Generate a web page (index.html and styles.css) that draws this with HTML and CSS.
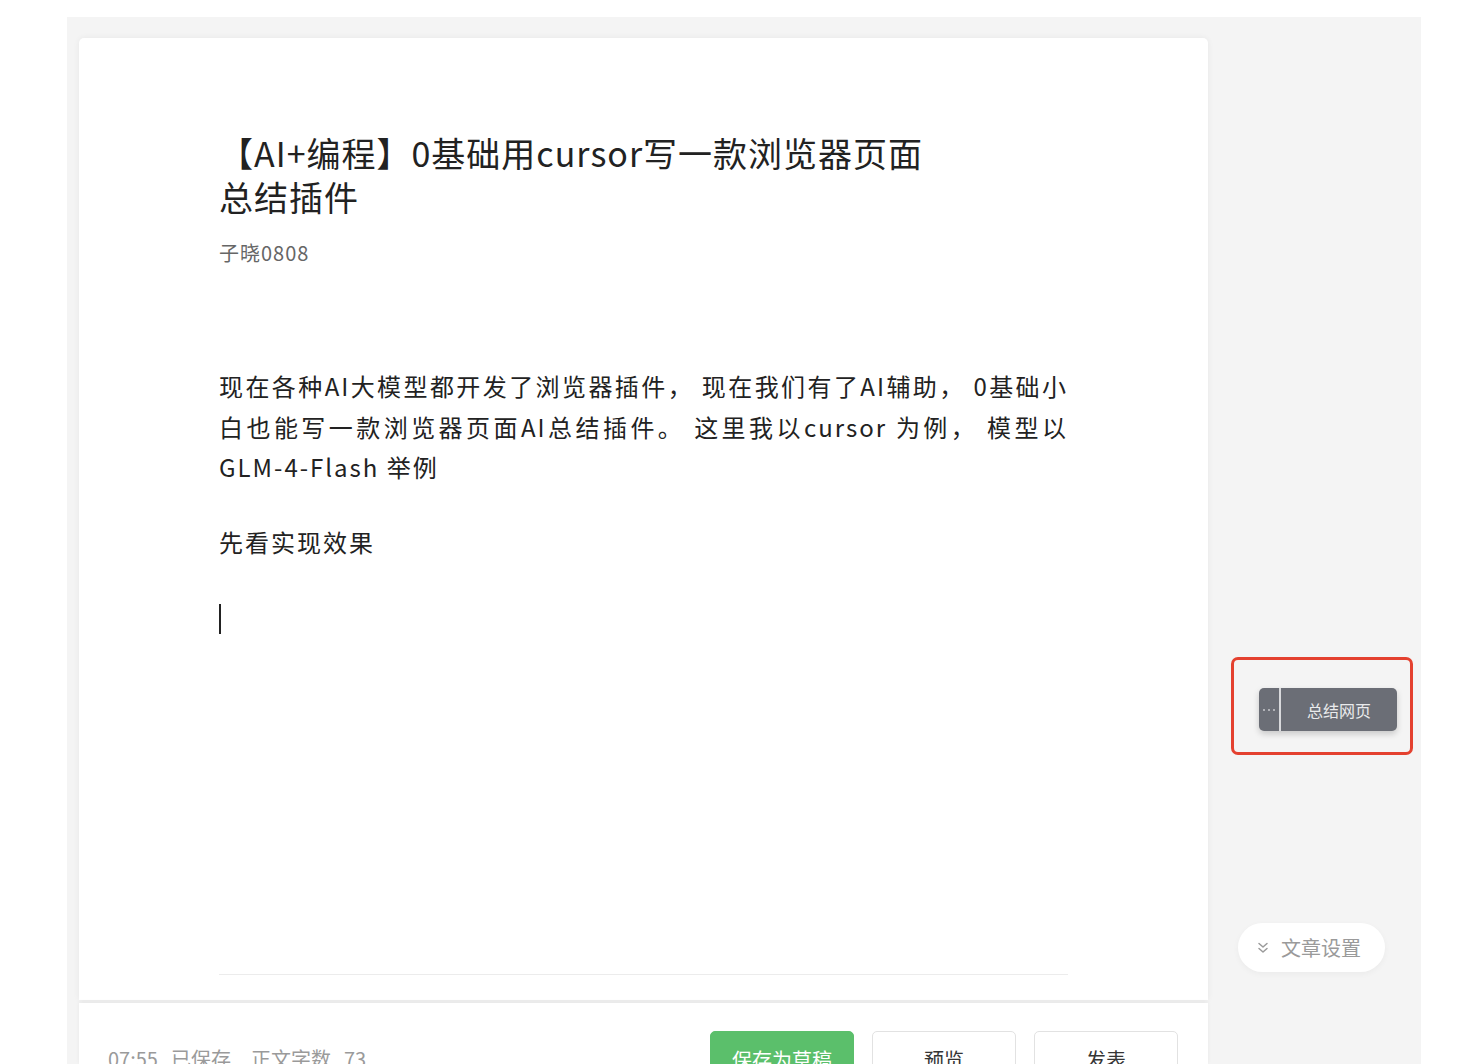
FILE: index.html
```html
<!DOCTYPE html>
<html lang="zh-CN">
<head>
<meta charset="utf-8">
<title>编辑器</title>
<link rel="stylesheet" href="styles.css">
</head>
<body>
<div class="shell">
  <div class="main">
    <div class="editor">
      <h1 class="title"><span class="title-line">【AI+编程】0基础用cursor写一款浏览器页面</span><span class="title-line">总结插件</span></h1>
      <div class="author">子晓0808</div>
      <div class="content">
        <p class="para">现在各种AI大模型都开发了浏览器插件， 现在我们有了AI辅助， 0基础小白也能写一款浏览器页面AI总结插件。 这里我以cursor 为例， 模型以GLM-4-Flash 举例</p>
        <p class="para">先看实现效果</p>
        <p class="para"><span class="caret"></span></p>
      </div>
      <div class="divider"></div>
    </div>
    <div class="footer">
      <div class="status"><span>07:55</span><span class="gap-s">已保存</span><span class="gap-l">正文字数</span><span class="gap-s">73</span></div>
      <div class="actions">
        <button class="btn btn-primary">保存为草稿</button>
        <button class="btn">预览</button>
        <button class="btn">发表</button>
      </div>
    </div>
  </div>
  <div class="side">
    <div class="highlight">
      <div class="summ-btn">
        <span class="dots"><i></i><i></i><i></i></span>
        <span class="summ-label">总结网页</span>
      </div>
    </div>
    <div class="settings">
      <svg class="chev" width="14" height="14" viewBox="0 0 14 14" fill="none" stroke="#9a9a9a" stroke-width="1.5" stroke-linecap="round" stroke-linejoin="round"><path d="M3 2.5 L7 6 L11 2.5"/><path d="M3 7.5 L7 11 L11 7.5"/></svg>
      <span class="settings-label">文章设置</span>
    </div>
  </div>
</div>
</body>
</html>
```

FILE: styles.css
```css
* { box-sizing: border-box; }
html, body {
  margin: 0;
  padding: 0;
  background: #ffffff;
  height: 1064px;
  overflow: hidden;
  font-family: "Noto Sans CJK SC", "Noto Sans", "Liberation Sans", sans-serif;
}
.shell {
  margin: 17px 43px 0 67px;
  height: 1047px;
  background: #f4f4f4;
  display: flex;
  padding: 21px 0 0 12px;
  overflow: hidden;
}
.main {
  width: 1129px;
  display: flex;
  flex-direction: column;
}
.editor {
  flex: 0 0 962px;
  height: 962px;
  background: #ffffff;
  border-radius: 5px 5px 0 0;
  box-shadow: 0 0 6px rgba(0, 0, 0, 0.06);
  padding: 93px 140px 25px;
  display: flex;
  flex-direction: column;
}
.title {
  margin: 0;
  font-size: 34px;
  line-height: 44px;
  font-weight: 400;
  color: #222;
  letter-spacing: 1px;
}
.title-line {
  display: block;
  height: 44px;
  white-space: nowrap;
}
.author {
  margin-top: 19px;
  font-size: 20px;
  line-height: 30px;
  color: #666;
  letter-spacing: 1px;
}
.content {
  flex: 1;
  margin-top: 98px;
}
.para {
  margin: 0 0 34px;
  font-size: 24px;
  line-height: 40.5px;
  letter-spacing: 2px;
  color: #222;
  text-align: justify;
}
.caret {
  display: inline-block;
  width: 2px;
  height: 30px;
  background: #222;
  vertical-align: middle;
}
.divider {
  height: 1px;
  background: #ececec;
}
.footer {
  margin-top: 3px;
  flex: 1 1 auto;
  min-height: 0;
  background: #ffffff;
  box-shadow: 0 -1px 4px rgba(0, 0, 0, 0.05);
  padding: 28px 30px 0 29px;
  display: flex;
  justify-content: space-between;
  align-items: flex-start;
}
.status {
  margin-top: 14px;
  font-size: 20px;
  line-height: 28px;
  color: #9a9a9a;
  display: flex;
}
.gap-s { margin-left: 13px; }
.gap-l { margin-left: 20px; }
.actions {
  display: flex;
  gap: 18px;
}
.btn {
  width: 144px;
  height: 56px;
  border: 1px solid #e2e2e2;
  border-radius: 5px;
  background: #ffffff;
  font-family: inherit;
  font-size: 20px;
  color: #353535;
  padding: 0;
}
.btn-primary {
  background: #5bbf6b;
  border-color: #5bbf6b;
  color: #ffffff;
}
.side {
  flex: 1;
  display: flex;
  flex-direction: column;
  align-items: flex-start;
}
.highlight {
  margin: 619px 0 0 23px;
  width: 182px;
  height: 98px;
  border: 3px solid #e4412f;
  border-radius: 7px;
  padding: 28px 0 0 25px;
}
.summ-btn {
  width: 138px;
  height: 43px;
  background: #6b6e76;
  border-radius: 5px;
  box-shadow: 0 3px 6px rgba(0, 0, 0, 0.18);
  display: flex;
  align-items: stretch;
}
.dots {
  width: 22px;
  border-right: 2px solid #d8d9dc;
  display: flex;
  align-items: center;
  justify-content: center;
  gap: 3px;
}
.dots i {
  width: 2px;
  height: 2px;
  border-radius: 50%;
  background: #c9cace;
}
.summ-label {
  flex: 1;
  display: flex;
  align-items: center;
  justify-content: center;
  font-size: 16px;
  color: #e9eaec;
}
.settings {
  margin: 168px 0 0 30px;
  width: 147px;
  height: 49px;
  border-radius: 25px;
  background: #ffffff;
  box-shadow: 0 2px 6px rgba(0, 0, 0, 0.04);
  display: flex;
  align-items: center;
  padding-left: 18px;
  gap: 11px;
}
.chev { display: block; }
.settings-label {
  font-size: 20px;
  color: #9a9a9a;
}
```
